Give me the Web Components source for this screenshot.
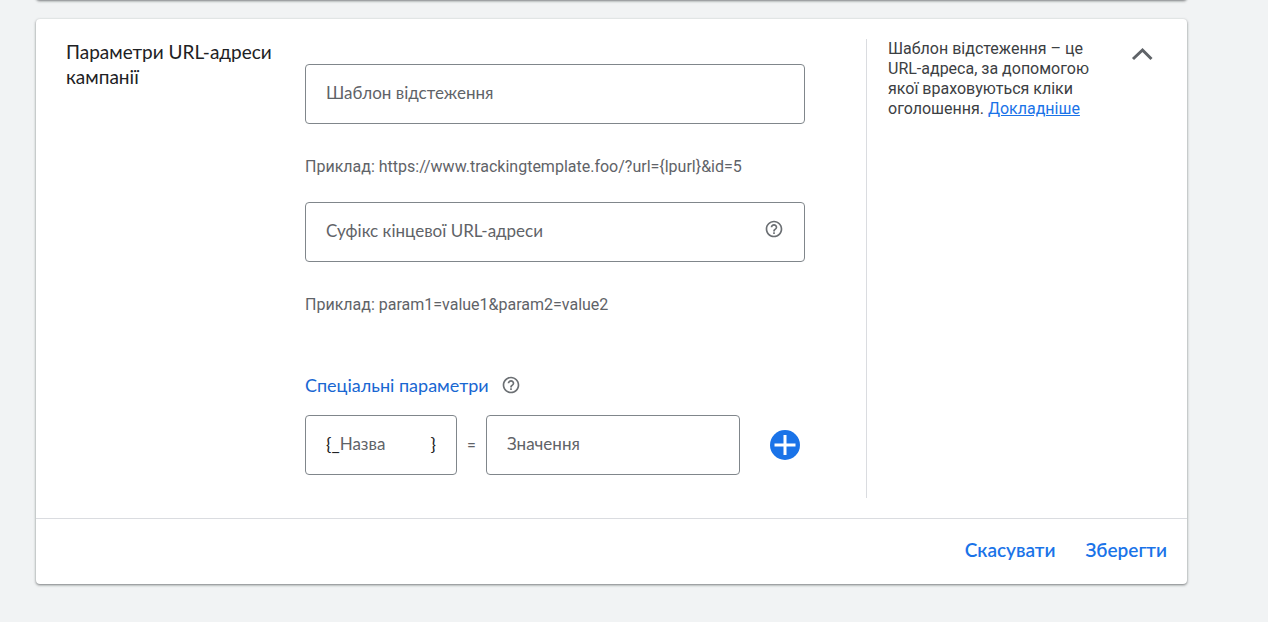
<!DOCTYPE html>
<html lang="uk">
<head>
<meta charset="utf-8">
<meta name="viewport" content="width=device-width, initial-scale=1">
<title>Параметри URL-адреси кампанії</title>
<style>
  body {
    margin: 0;
    background: #f1f3f4;
    color: #202124;
    font-family: Roboto, sans-serif;
    font-size: 16px;
    --display: Lato, "Open Sans", sans-serif;
    --blue: #1a73e8;
    --grey: #5f6368;
    --line: #dadce0;
  }
</style>
</head>
<body>
<campaign-settings></campaign-settings>
<script>
const define = (name, html, setup) => {
  const template = document.createElement('template');
  template.innerHTML = html;
  customElements.define(name, class extends HTMLElement {
    constructor() {
      super();
      this.attachShadow({ mode: 'open' }).append(template.content.cloneNode(true));
    }
    connectedCallback() { if (setup) setup(this, this.shadowRoot); }
  });
};

define('panel-card', `
  <style>
    :host {
      display: block; background: #fff; border-radius: 4px; overflow: clip;
      box-shadow: 0 1px 3px rgba(60,64,67,.45), 0 1px 2px rgba(60,64,67,.3);
    }
    .footer { display: flex; justify-content: flex-end; gap: 30px; padding: 0 20px; border-top: 1px solid var(--line); }
    :host([collapsed]) { height: 8px; }
    :host([collapsed]) .footer { display: none; }
  </style>
  <slot></slot>
  <div class="footer"><slot name="actions"></slot></div>`);

define('text-action', `
  <style>
    :host { display: block; }
    button { height: 65px; padding: 0 0 4px; border: 0; background: none; color: var(--blue); font: 600 19px/24px var(--display); cursor: pointer; }
  </style>
  <button type="button"><slot></slot></button>`);

define('help-icon', `
  <style>
    :host { display: block; }
    button { display: block; padding: 0; border: 0; background: none; color: #6b6f73; cursor: pointer; }
    svg { display: block; width: 20px; height: 20px; fill: currentColor; }
  </style>
  <button type="button" aria-label="Довідка">
    <svg viewBox="0 0 24 24"><path d="M11 18h2v-2h-2v2zm1-16C6.480 2 2 6.480 2 12s4.480 10 10 10 10-4.480 10-10S17.520 2 12 2zm0 18c-4.410 0-8-3.590-8-8s3.590-8 8-8 8 3.590 8 8-3.590 8-8 8zm0-14c-2.210 0-4 1.790-4 4h2c0-1.100.9-2 2-2s2 .9 2 2c0 2-3 1.750-3 5h2c0-2.250 3-2.500 3-5 0-2.210-1.790-4-4-4z"/></svg>
  </button>`);

define('outlined-field', `
  <style>
    :host { display: block; }
    .box { display: flex; align-items: center; box-sizing: border-box; height: 60px; padding: 0 20px 2px; border: 1px solid #80868b; border-radius: 4px; }
    .box:focus-within { border-color: var(--blue); }
    input { flex: 1; min-width: 0; height: 24px; padding: 0; border: 0; outline: 0; background: none; color: inherit; font: 17px/24px var(--display); }
    input::placeholder { color: var(--grey); opacity: 1; }
    ::slotted(span) { font: 18px/24px var(--display); }
    ::slotted(help-icon) { padding-bottom: 4px; }
    p { margin: 32px 0 0; color: var(--grey); line-height: 22px; }
    p:empty { display: none; }
  </style>
  <div class="box"><slot name="before"></slot><input type="text" aria-describedby="hint"><slot name="after"></slot></div>
  <p id="hint"></p>`,
  (host, root) => {
    const input = root.querySelector('input');
    input.placeholder = host.getAttribute('label');
    input.setAttribute('aria-label', host.getAttribute('label'));
    root.querySelector('p').textContent = host.getAttribute('hint') || '';
  });

define('custom-parameters', `
  <style>
    :host { display: block; }
    .title { display: flex; align-items: center; gap: 12px; }
    h3 { margin: 0; color: #1967d2; font: 400 18px/24px var(--display); }
    .row { display: flex; align-items: center; margin-top: 18px; }
    .name { width: 152px; }
    .equals { width: 29px; text-align: center; color: var(--grey); }
    .value { flex: 1; }
    .add { display: block; margin: 0 5px 0 30px; padding: 0; border: 0; background: none; cursor: pointer; }
    svg { display: block; width: 30px; height: 30px; }
  </style>
  <div class="title"><h3>Спеціальні параметри</h3><help-icon></help-icon></div>
  <div class="row">
    <outlined-field class="name" label="Назва"><span slot="before">{_</span><span slot="after">}</span></outlined-field>
    <span class="equals">=</span>
    <outlined-field class="value" label="Значення"></outlined-field>
    <button class="add" type="button" aria-label="Додати параметр">
      <svg viewBox="0 0 30 30"><circle cx="15" cy="15" r="15" fill="#1a73e8"/><path d="M15 5v20M4.500 15h21" stroke="#fff" stroke-width="3"/></svg>
    </button>
  </div>`);

define('side-note', `
  <style>
    :host { display: flex; justify-content: space-between; align-items: flex-start; border-left: 1px solid var(--line); padding: 0 34px 0 21px; }
    p { margin: 0; color: #3c4043; line-height: 20px; }
    a { color: var(--blue); }
    button { margin-top: 8px; padding: 0; border: 0; background: none; color: var(--grey); cursor: pointer; }
    svg { display: block; width: 22px; height: 14px; }
  </style>
  <p>Шаблон відстеження – це<br>URL-адреса, за допомогою<br>якої враховуються кліки<br>оголошення. <a href="#more">Докладніше</a></p>
  <button type="button" aria-label="Згорнути"><svg viewBox="0 0 22 14" fill="none" stroke="currentColor" stroke-width="3"><path d="M2 12l9.500-9 9 9"/></svg></button>`);

define('campaign-settings', `
  <style>
    :host { display: block; margin-top: -8px; padding: 0 81px 36px 36px; }
    .body { display: grid; grid-template-columns: 269px minmax(0, 500px) minmax(300px, 1fr); padding: 20px 0; }
    h2 { margin: 0; padding: 0 20px 0 30px; font: 400 19px/25px var(--display); }
    .fields { display: flex; flex-direction: column; padding: 25px 0 23px; }
    .fields > outlined-field { margin-bottom: 24px; }
    .fields > custom-parameters { margin-top: 33px; }
    side-note { margin-left: 61px; }
    .current { margin-top: 19px; }
  </style>
  <panel-card collapsed></panel-card>
  <panel-card class="current">
    <div class="body">
      <h2>Параметри URL-адреси кампанії</h2>
      <div class="fields">
        <outlined-field label="Шаблон відстеження" hint="Приклад: https://www.trackingtemplate.foo/?url={lpurl}&amp;id=5"></outlined-field>
        <outlined-field label="Суфікс кінцевої URL-адреси" hint="Приклад: param1=value1&amp;param2=value2"><help-icon slot="after"></help-icon></outlined-field>
        <custom-parameters></custom-parameters>
      </div>
      <side-note></side-note>
    </div>
    <text-action slot="actions">Скасувати</text-action>
    <text-action slot="actions">Зберегти</text-action>
  </panel-card>`);
</script>
</body>
</html>
